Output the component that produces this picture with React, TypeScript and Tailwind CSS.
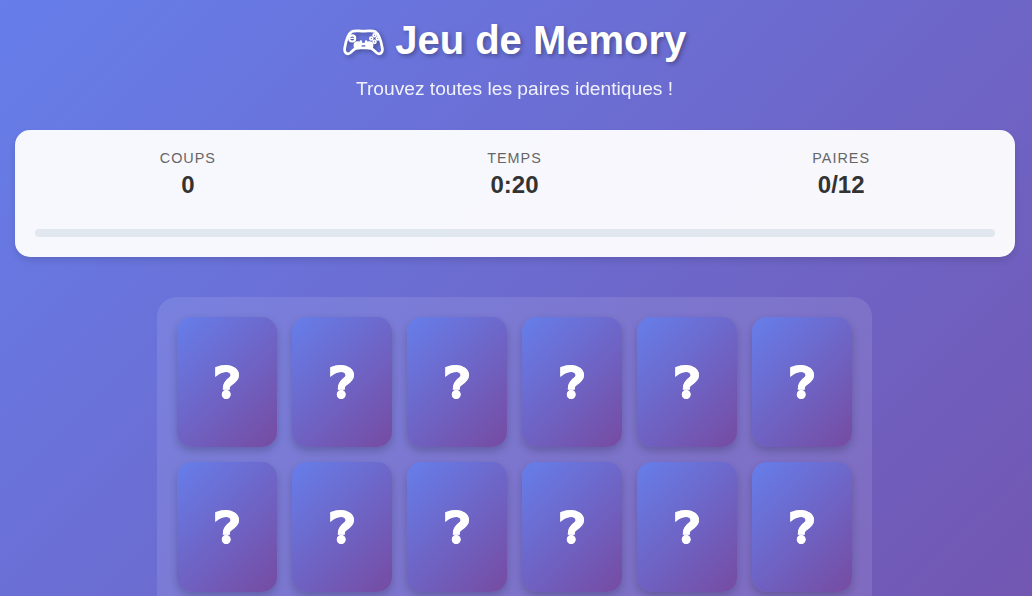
const stats = [
  { label: 'COUPS', value: '0' },
  { label: 'TEMPS', value: '0:20' },
  { label: 'PAIRES', value: '0/12' },
];

const cards = Array.from({ length: 12 }, (_, index) => index);

function GamepadIcon() {
  return (
    <svg
      className="h-[31px] w-[44px] drop-shadow-[2px_2px_2px_rgba(0,0,0,0.3)]"
      viewBox="1 0 43 30"
      fill="none"
      stroke="white"
      strokeLinecap="round"
      strokeLinejoin="round"
    >
      <path
        d="M10.5 6.4C13 4.8 17 5.8 22 5.8S31 4.8 33.5 6.4C37.5 9 39.3 16 40.3 22C41 26 39.3 28 37 28C33.8 28 32.5 23 28.5 22.2H15.5C11.5 23 10.2 28 7 28C4.7 28 3 26 3.7 22C4.7 16 6.5 9 10.5 6.4Z"
        strokeWidth="2.7"
      />
      <circle cx="11" cy="13" r="3" strokeWidth="2" />
      <path d="M9.6 13H12.8" strokeWidth="1.3" />
      <circle cx="32.8" cy="9.9" r="1.4" strokeWidth="1.7" />
      <circle cx="32.8" cy="16.3" r="1.4" strokeWidth="1.7" />
      <circle cx="29.6" cy="13.1" r="1.4" strokeWidth="1.7" />
      <circle cx="36" cy="13.1" r="1.4" strokeWidth="1.7" />
      <circle cx="16.3" cy="19.8" r="4" fill="white" stroke="none" />
      <circle cx="27.7" cy="19.8" r="4" fill="white" stroke="none" />
      <path d="M19.4 15.9V18M24.6 15.9V18M18.5 18.4H25.5" strokeWidth="2.4" />
    </svg>
  );
}

function Header() {
  return (
    <header className="flex flex-col items-center text-white">
      <h1 className="flex h-[46px] items-center gap-[9px] pr-[1.5px] text-[40px] font-bold leading-[46px] [text-shadow:2px_2px_4px_rgba(0,0,0,0.3)]">
        <GamepadIcon />
        Jeu de Memory
      </h1>
      <p className="mt-[15px] pr-px text-[19.2px] leading-[22px] opacity-90">
        Trouvez toutes les paires identiques !
      </p>
    </header>
  );
}

function StatsPanel() {
  return (
    <section className="mt-[30px] h-[127px] rounded-[15px] bg-white/95 p-5 shadow-[0_4px_6px_rgba(0,0,0,0.1)]">
      <div className="grid grid-cols-3 gap-5">
        {stats.map((stat) => (
          <div key={stat.label} className="flex flex-col items-center pr-px">
            <span className="mb-[5px] text-[14.4px] leading-4 tracking-[1px] text-[#666]">{stat.label}</span>
            <span className="text-2xl leading-7 font-bold text-[#333]">{stat.value}</span>
          </div>
        ))}
      </div>
      <div className="mt-[30px] h-2 rounded bg-[#e0e7ee]" />
    </section>
  );
}

function Board() {
  return (
    <section className="mt-10 ml-[142px] grid h-[605px] w-[715px] auto-rows-[130px] grid-cols-6 gap-[15px] rounded-[20px] bg-white/10 p-5">
      {cards.map((card) => (
        <button
          key={card}
          className="flex items-center justify-center rounded-[15px] bg-[linear-gradient(135deg,#667eea_0%,#764ba2_100%)] pt-[2px] font-['DejaVu_Sans',sans-serif] text-[42px] leading-none font-bold text-white shadow-[0_4px_8px_rgba(0,0,0,0.2)] [-webkit-text-stroke:0.6px_white]"
        >
          <span className="scale-x-[0.98] scale-y-[1.01]">{'❓\uFE0E'}</span>
        </button>
      ))}
    </section>
  );
}

export default function App() {
  return (
    <div className="h-[596px] overflow-hidden font-['Liberation_Sans',Arial,sans-serif]">
      <main className="h-[1070px] bg-[linear-gradient(135deg,#667eea_0%,#764ba2_100%)] pt-[17px]">
        <div className="ml-[15px] w-[1000px]">
          <Header />
          <StatsPanel />
          <Board />
        </div>
      </main>
    </div>
  );
}
